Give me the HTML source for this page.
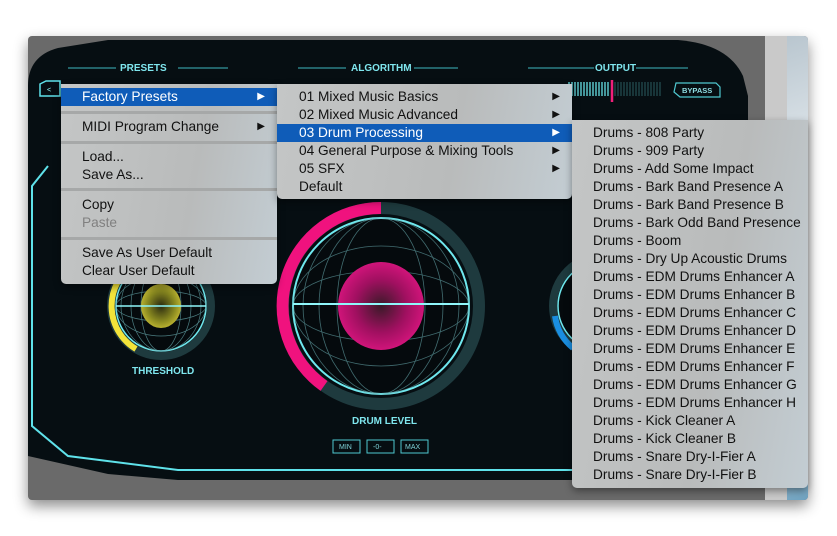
<!DOCTYPE html>
<html><head><meta charset="utf-8"><style>
*{margin:0;padding:0;box-sizing:border-box}
body{width:837px;height:536px;background:#fff;position:relative;overflow:hidden;font-family:"Liberation Sans",sans-serif}
.win{position:absolute;left:28px;top:36px;width:780px;height:464px;background:#6a6a6a;border-radius:4px;box-shadow:0 6px 14px rgba(0,0,0,.45);overflow:hidden}
.strip{position:absolute;left:737px;top:0;width:22px;height:464px;background:#c9c9c9}
.tex{position:absolute;left:759px;top:0;width:21px;height:464px;background:linear-gradient(160deg,#b9c6cf,#e5ebef 30%,#9fb0bd 60%,#d7dee3 80%,#6ea2c0)}
.panel{position:absolute;left:0;top:0;width:737px;height:444px}
.menu{position:absolute;background:linear-gradient(100deg,#c4c6c6,#b9bbbb 60%,#c3cdd3);border-radius:0 0 5px 5px;box-shadow:0 3px 8px rgba(0,0,0,.4);font-size:13.7px;color:#111}
.it{position:absolute;left:0;right:0;height:18px;line-height:18px}
.hl{background:#0f5cb8;color:#fff}
.sep{position:absolute;left:0;right:0;height:3px;background:#a6a8a8}
.ar{position:absolute;right:12px;top:0;font-size:10px}
.lbl{position:absolute;color:#7fe6ee;font-size:10px;font-weight:bold}
</style></head><body>
<div class="win">
<svg class="panel" width="737" height="444" viewBox="0 0 737 444">
<defs>
<radialGradient id="pk" cx=".5" cy=".5" r=".5"><stop offset="0" stop-color="#3a1a28"/><stop offset=".6" stop-color="#a01060"/><stop offset="1" stop-color="#d0147a"/></radialGradient>
<radialGradient id="yl" cx=".5" cy=".5" r=".5"><stop offset="0" stop-color="#2a2a10"/><stop offset=".7" stop-color="#8a8a20"/><stop offset="1" stop-color="#b8b030"/></radialGradient>
</defs>
<path d="M0 50 Q0 20 30 12 L80 4 L650 4 Q700 8 715 40 L720 60 L720 444 L0 444 Z" fill="#060e12"/>
<path d="M0 444 L0 420 L80 438 L150 444 Z" fill="#6a6a6a"/>
<path d="M20 130 L4 150 L4 390 L40 420 L150 434 L737 434" fill="none" stroke="#5fe2ea" stroke-width="2"/>
<line x1="40" y1="32" x2="88" y2="32" stroke="#3fb8c0"/><line x1="150" y1="32" x2="200" y2="32" stroke="#3fb8c0"/>
<line x1="270" y1="32" x2="318" y2="32" stroke="#3fb8c0"/><line x1="386" y1="32" x2="430" y2="32" stroke="#3fb8c0"/>
<line x1="500" y1="32" x2="566" y2="32" stroke="#3fb8c0"/><line x1="608" y1="32" x2="660" y2="32" stroke="#3fb8c0"/>
<path d="M12 48 L18 45 L32 45 L32 60 L12 60 Z" fill="none" stroke="#5fe2ea" stroke-width="1.5"/>
<text x="19" y="56" fill="#9ff" font-size="7">&lt;</text>
<g stroke="#6ff0f5" stroke-width="1.2"><path d="M541 46v14M544 46v14M547 46v14M550 46v14M553 46v14M556 46v14M559 46v14M562 46v14M565 46v14M568 46v14M571 46v14M574 46v14M577 46v14M580 46v14"/></g>
<g stroke="#2a5c60" stroke-width="1"><path d="M587 46v14M590 46v14M593 46v14M596 46v14M599 46v14M602 46v14M605 46v14M608 46v14M611 46v14M614 46v14M617 46v14M620 46v14M623 46v14M626 46v14M629 46v14M632 46v14"/></g>
<line x1="584" y1="44" x2="584" y2="66" stroke="#f0207a" stroke-width="2.5"/>
<path d="M648 47 L688 47 L692 51 L692 61 L652 61 L646 56 Z" fill="none" stroke="#4fc8d0" stroke-width="1.2"/>
<text x="654" y="57" fill="#8fdde2" font-size="7.5" font-weight="bold">BYPASS</text>
<circle cx="133" cy="270" r="50" fill="none" stroke="#1e3a3e" stroke-width="8"/>
<path d="M108 313 A50 50 0 0 1 105 229" fill="none" stroke="#f3e43a" stroke-width="6"/>
<circle cx="133" cy="270" r="45" fill="#050a0d" stroke="#6fe8ee" stroke-width="1.5"/>
<g fill="none" stroke="#6aaeb2" stroke-width=".7" opacity=".7">
<ellipse cx="133" cy="270" rx="40" ry="45"/><ellipse cx="133" cy="270" rx="30" ry="45"/><ellipse cx="133" cy="270" rx="20" ry="45"/><ellipse cx="133" cy="270" rx="45" ry="30"/><ellipse cx="133" cy="270" rx="45" ry="15"/></g>
<ellipse cx="133" cy="270" rx="20" ry="22" fill="url(#yl)"/>
<line x1="88" y1="270" x2="178" y2="270" stroke="#8ff6fa" stroke-width="1.5"/>
<circle cx="353" cy="270" r="98" fill="none" stroke="#1e3a3e" stroke-width="12"/>
<path d="M353 172 A98 98 0 0 0 296 350" fill="none" stroke="#f0127e" stroke-width="12"/>
<circle cx="353" cy="270" r="88" fill="#050a0d" stroke="#6fe8ee" stroke-width="2"/>
<g fill="none" stroke="#6aaeb2" stroke-width=".8" opacity=".6">
<ellipse cx="353" cy="270" rx="78" ry="88"/><ellipse cx="353" cy="270" rx="62" ry="88"/><ellipse cx="353" cy="270" rx="44" ry="88"/><ellipse cx="353" cy="270" rx="88" ry="60"/><ellipse cx="353" cy="270" rx="88" ry="35"/></g>
<ellipse cx="353" cy="270" rx="43" ry="44" fill="url(#pk)"/>
<line x1="265" y1="268" x2="441" y2="268" stroke="#8ff6fa" stroke-width="2"/>
<circle cx="575" cy="270" r="50" fill="none" stroke="#1e3a3e" stroke-width="8"/>
<path d="M527 280 A50 50 0 0 0 545 312" fill="none" stroke="#1a8ee0" stroke-width="6"/>
<circle cx="575" cy="270" r="45" fill="#050a0d" stroke="#6fe8ee" stroke-width="1.5"/>
<g fill="none" stroke="#4fc8d0" stroke-width="1" transform="translate(305,404)">
<rect x="0" y="0" width="27" height="13"/><rect x="34" y="0" width="27" height="13"/><rect x="68" y="0" width="27" height="13"/></g>
<g fill="#7fd2d8" font-size="7" font-family="Liberation Sans"><text x="311" y="413">MIN</text><text x="345" y="413">-0-</text><text x="377" y="413">MAX</text></g>
</svg>
<div class="lbl" style="left:92px;top:27px">PRESETS</div>
<div class="lbl" style="left:323px;top:27px">ALGORITHM</div>
<div class="lbl" style="left:567px;top:27px">OUTPUT</div>
<div class="lbl" style="left:104px;top:330px">THRESHOLD</div>
<div class="lbl" style="left:324px;top:380px">DRUM LEVEL</div>
<div class="strip"></div><div class="tex"></div>
</div>

<div class="menu" style="left:61px;top:84px;width:216px;height:200px">
<div class="it hl" style="top:4px;padding-left:21px">Factory Presets<span class="ar">▶</span></div>
<div class="sep" style="top:27px"></div>
<div class="it" style="top:34px;padding-left:21px">MIDI Program Change<span class="ar">▶</span></div>
<div class="sep" style="top:57px"></div>
<div class="it" style="top:64px;padding-left:21px">Load...</div>
<div class="it" style="top:82px;padding-left:21px">Save As...</div>
<div class="sep" style="top:104px"></div>
<div class="it" style="top:112px;padding-left:21px">Copy</div>
<div class="it" style="top:130px;padding-left:21px;color:#808080">Paste</div>
<div class="sep" style="top:153px"></div>
<div class="it" style="top:160px;padding-left:21px">Save As User Default</div>
<div class="it" style="top:178px;padding-left:21px">Clear User Default</div>
</div>

<div class="menu" style="left:277px;top:84px;width:295px;height:115px">
<div class="it" style="top:4px;padding-left:22px">01 Mixed Music Basics<span class="ar">▶</span></div>
<div class="it" style="top:22px;padding-left:22px">02 Mixed Music Advanced<span class="ar">▶</span></div>
<div class="it hl" style="top:40px;padding-left:22px">03 Drum Processing<span class="ar">▶</span></div>
<div class="it" style="top:58px;padding-left:22px">04 General Purpose &amp; Mixing Tools<span class="ar">▶</span></div>
<div class="it" style="top:76px;padding-left:22px">05 SFX<span class="ar">▶</span></div>
<div class="it" style="top:94px;padding-left:22px">Default</div>
</div>

<div class="menu" style="left:572px;top:120px;width:236px;height:368px;border-radius:0 0 5px 5px">
<div style="position:absolute;left:21px;top:4px;line-height:18px;white-space:nowrap">
Drums - 808 Party<br>Drums - 909 Party<br>Drums - Add Some Impact<br>Drums - Bark Band Presence A<br>Drums - Bark Band Presence B<br>Drums - Bark Odd Band Presence<br>Drums - Boom<br>Drums - Dry Up Acoustic Drums<br>Drums - EDM Drums Enhancer A<br>Drums - EDM Drums Enhancer B<br>Drums - EDM Drums Enhancer C<br>Drums - EDM Drums Enhancer D<br>Drums - EDM Drums Enhancer E<br>Drums - EDM Drums Enhancer F<br>Drums - EDM Drums Enhancer G<br>Drums - EDM Drums Enhancer H<br>Drums - Kick Cleaner A<br>Drums - Kick Cleaner B<br>Drums - Snare Dry-I-Fier A<br>Drums - Snare Dry-I-Fier B
</div></div>
</body></html>
